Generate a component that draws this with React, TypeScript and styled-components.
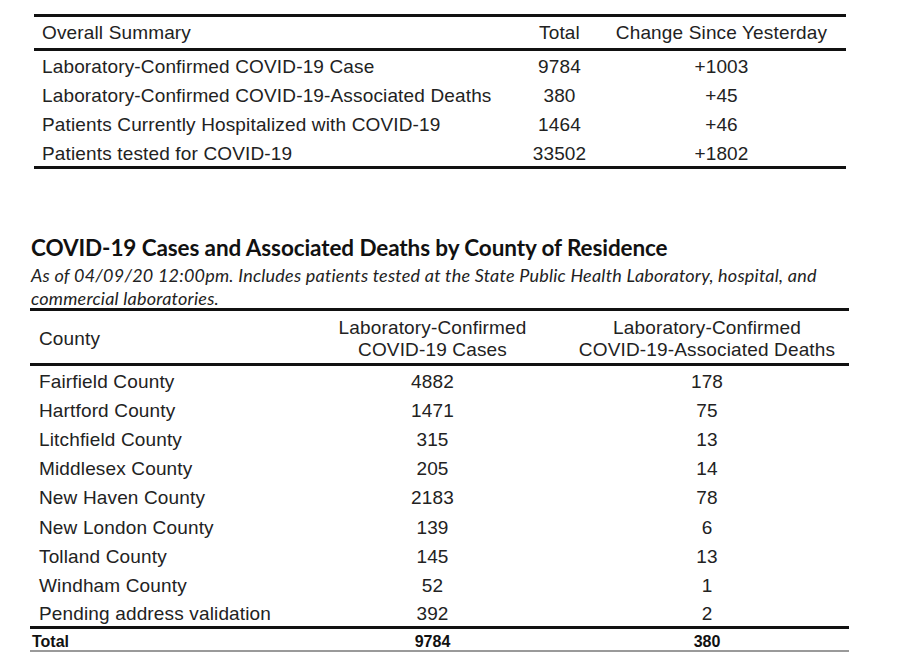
import React from "react";
import styled, { createGlobalStyle } from "styled-components";

const Global = createGlobalStyle`
  html, body { margin: 0; padding: 0; background: #fff; }
  body { font-family: "Liberation Sans", Arial, sans-serif; color: #1a1a1a; }
`;

const Page = styled.div`
  width: 906px;
  height: 666px;
  overflow: hidden;
  padding-top: 14px;
  box-sizing: border-box;
  display: flex;
  flex-direction: column;
`;

const Table = styled.table<{ $left: number; $width: number }>`
  margin-left: ${(p) => p.$left}px;
  width: ${(p) => p.$width}px;
  border-collapse: collapse;
  table-layout: fixed;
  font-family: "Liberation Sans", Arial, sans-serif;
  font-size: 19px;
  letter-spacing: 0.15px;
  color: #222;
`;

const HeadRow = styled.tr<{ $h: number }>`
  height: ${(p) => p.$h}px;
  border-top: 3px solid #111;
  border-bottom: 3px solid #111;
`;

const Th = styled.th<{ $align?: string; $pad?: number; $top?: number }>`
  font-weight: normal;
  text-align: ${(p) => p.$align || "center"};
  padding: ${(p) => p.$top || 0}px 0 0 ${(p) => p.$pad || 0}px;
  line-height: 22px;
  vertical-align: middle;
`;

const Row = styled.tr<{ $h: number; $last?: boolean }>`
  height: ${(p) => p.$h}px;
  ${(p) => (p.$last ? "border-bottom: 3px solid #111;" : "")}
`;

const Td = styled.td<{ $align?: string; $pad?: number; $top?: number }>`
  text-align: ${(p) => p.$align || "center"};
  padding: ${(p) => p.$top || 0}px 0 0 ${(p) => p.$pad || 0}px;
  line-height: 22px;
  white-space: nowrap;
  vertical-align: middle;
`;

const TotalRow = styled.tr`
  height: 21px;
  border-top: 3px solid #111;
  border-bottom: 2px solid #9a9a9a;
`;

const TotalTd = styled.td<{ $align?: string; $pad?: number }>`
  text-align: ${(p) => p.$align || "center"};
  padding: 5px 0 0 ${(p) => p.$pad || 0}px;
  font-weight: bold;
  font-size: 16px;
  letter-spacing: 0;
  line-height: 16px;
  color: #111;
`;

const Section = styled.div`
  margin-top: 66px;
  padding-left: 31px;
  display: flex;
  flex-direction: column;
`;

const Title = styled.h2`
  margin: 0;
  font-family: Lato, "Noto Sans", sans-serif;
  font-weight: 700;
  font-size: 22.5px;
  letter-spacing: -0.1px;
  line-height: 26px;
  color: #111;
`;

const Subtitle = styled.p`
  margin: 3px 0 -2px;
  font-family: Lato, "Noto Sans", sans-serif;
  font-style: italic;
  font-size: 18px;
  letter-spacing: 0.22px;
  line-height: 23px;
  width: 800px;
  color: #222;
`;

const summary = [
  ["Laboratory-Confirmed COVID-19 Case", "9784", "+1003"],
  ["Laboratory-Confirmed COVID-19-Associated Deaths", "380", "+45"],
  ["Patients Currently Hospitalized with COVID-19", "1464", "+46"],
  ["Patients tested for COVID-19", "33502", "+1802"],
];

const counties = [
  ["Fairfield County", "4882", "178"],
  ["Hartford County", "1471", "75"],
  ["Litchfield County", "315", "13"],
  ["Middlesex County", "205", "14"],
  ["New Haven County", "2183", "78"],
  ["New London County", "139", "6"],
  ["Tolland County", "145", "13"],
  ["Windham County", "52", "1"],
  ["Pending address validation", "392", "2"],
];

export default function App() {
  return (
    <Page>
      <Global />
      <Table $left={34} $width={812}>
        <colgroup>
          <col style={{ width: 488 }} />
          <col style={{ width: 75 }} />
          <col style={{ width: 249 }} />
        </colgroup>
        <thead>
          <HeadRow $h={34}>
            <Th $align="left" $pad={8}>Overall Summary</Th>
            <Th>Total</Th>
            <Th>Change Since Yesterday</Th>
          </HeadRow>
        </thead>
        <tbody>
          {summary.map((r, i) => (
            <Row key={r[0]} $h={29.5} $last={i === summary.length - 1}>
              <Td $align="left" $pad={8} $top={4}>{r[0]}</Td>
              <Td $top={4}>{r[1]}</Td>
              <Td $top={4}>{r[2]}</Td>
            </Row>
          ))}
        </tbody>
      </Table>

      <Section>
        <Title>COVID-19 Cases and Associated Deaths by County of Residence</Title>
        <Subtitle>
          As of 04/09/20 12:00pm. Includes patients tested at the State Public Health Laboratory, hospital, and
          commercial laboratories.
        </Subtitle>
      </Section>

      <Table $left={30} $width={819}>
        <colgroup>
          <col style={{ width: 270 }} />
          <col style={{ width: 265 }} />
          <col style={{ width: 284 }} />
        </colgroup>
        <thead>
          <HeadRow $h={55}>
            <Th $align="left" $pad={9} $top={3}>County</Th>
            <Th $top={3}>Laboratory-Confirmed<br />COVID-19 Cases</Th>
            <Th $top={3}>Laboratory-Confirmed<br />COVID-19-Associated Deaths</Th>
          </HeadRow>
        </thead>
        <tbody>
          {counties.map((r) => (
            <Row key={r[0]} $h={29.2}>
              <Td $align="left" $pad={9} $top={5}>{r[0]}</Td>
              <Td $top={5}>{r[1]}</Td>
              <Td $top={5}>{r[2]}</Td>
            </Row>
          ))}
          <TotalRow>
            <TotalTd $align="left" $pad={2}>Total</TotalTd>
            <TotalTd>9784</TotalTd>
            <TotalTd>380</TotalTd>
          </TotalRow>
        </tbody>
      </Table>
    </Page>
  );
}
